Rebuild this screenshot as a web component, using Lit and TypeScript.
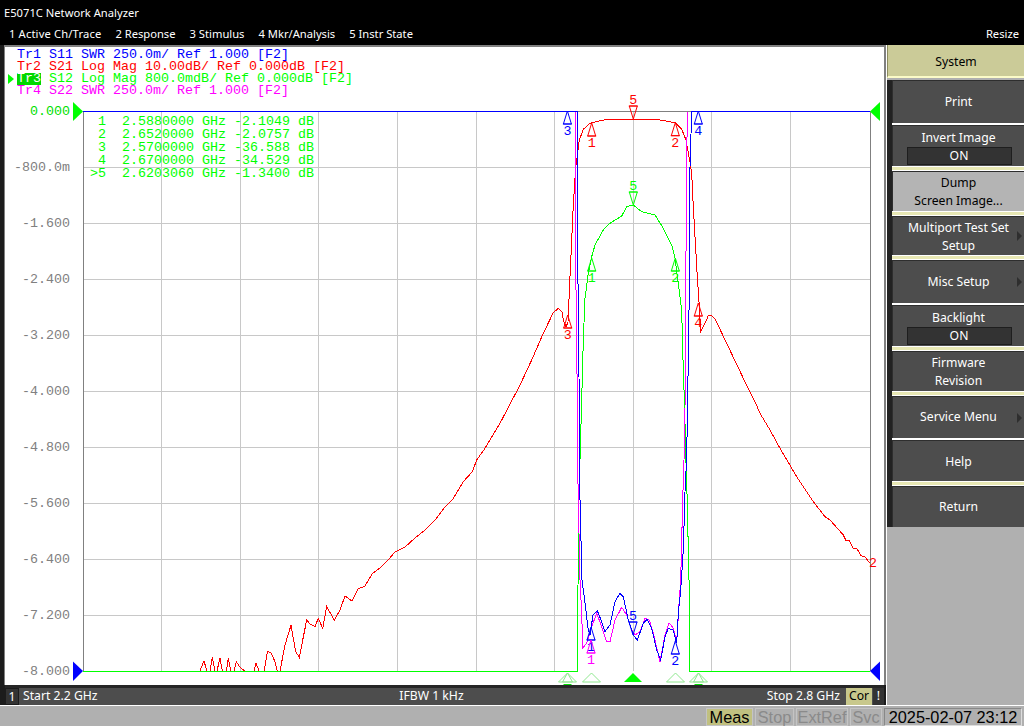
import { LitElement, html, svg, css } from "lit";
import { customElement } from "lit/decorators.js";

const BLUE = "#0000ff";
const RED = "#ff0000";
const GREEN = "#00ff00";
const MAGENTA = "#ff00ff";

const PLOT = { left: 83, right: 870, top: 111, bottom: 671 };

// traces in page pixels, read off the reference
const S21 =
  "83,671 200,671 204,660.7 206.7,671 210,671 212.3,657.3 215,671 217,671 220,658 222.3,671 226.5,671 228.3,658 230.7,671 234,671 236.3,662 240.7,668 245,671 254,671 256,663 259,671 264.3,671 267.3,651.7 270.7,652.3 275,661.7 277.3,671 280,671 285,645 291,625.3 295.7,651.7 299.3,657.3 306.7,620 310,624 315,626.7 318.3,618.3 322.7,628.3 326.7,606.7 334.3,620 340,610 345,596 352,601 358,589 365,586 372,574 380,568 388,560 395,552 405,547 415,538 425,530 435,520 445,507 452.7,499.3 463.3,481.7 472.3,471.7 476.7,460 485,448.3 500,423.3 520,385 531.7,360 543.3,333.3 553.3,312.7 558.3,308.3 562,312 563.3,320 566,327 568,322 570,276.7 573.3,205 575.7,166.7 577.7,153 579.3,140 583.3,129.3 590,123.3 600,120.7 608.3,119.3 633.3,119.3 660,120 675,122.7 681.7,129.3 686,140 688.3,153 690,162 691.7,173 693.3,206.7 697.3,276.7 699.3,306.7 700.7,331.7 705,323.3 708.3,315.7 711.7,315.7 715.7,320 722.7,335 743.3,378.3 755,401.7 760,413.3 770,430 780,448.3 796.7,476.7 813.3,501.7 825,516.7 830,520 843.3,535 845.7,540 849.3,540 853.3,549 856.7,548.3 861,555.7 865,556.7 869.3,562.7";
const S11 =
  "83,111 577.3,111 577.7,223 578.3,340 579,376.7 580,500 582,580 585,603 588.3,630 590,635 593,615 597.3,610.7 601.7,621.7 605,631.7 610,625 615,601.7 620,593.3 623.3,596.7 628.3,620 633.3,635 637.3,640 643.3,623.3 647.3,619.3 651.7,628.3 656.7,650 660.7,660 665,636.7 668.3,628.3 673.3,630 676.7,643.3 678.3,613.3 680.7,590 683.3,550 685,491.7 686.7,456.7 688.3,358 689.3,290 690,166.7 691.7,111 870,111";
const S22 =
  "575.7,111 575.7,163 576,290 576.7,300 577.3,443 578.3,500 580,580 581.7,613 582.7,648 586.7,643 591.7,626.7 596.7,613.3 601.7,626.7 606.7,641.7 610,641.7 615,620 621.7,607.3 626.7,615 631.7,630 635,635 640,631.7 645,618.3 649.3,620 653.3,633.3 660,661.7 665,635 669,622.7 673.3,628.3 676.7,641.7 679.3,600 680.7,580 682.7,500 684,460 685,410 685.7,290 686.7,166.7 687.3,111";
const S12 =
  "83,671 577.5,671 577.5,610 578.5,560 579,500 580,460 581.7,400 583.3,340 585,298.3 588.3,273 591.7,256.7 595,245 603.3,230 610,223.3 621.7,216 626.7,206.7 633.3,205 641.7,211.7 655,215 663.3,228.3 671.7,245 675,258.3 678.3,283.3 680,297 681.7,310 682.7,350 684,390 685,423 686,463 687.3,503 688.3,550 689,580 689,622 689.3,671 870,671";

const LEGEND = [
  { id: "Tr1", rest: " S11 SWR 250.0m/ Ref 1.000 [F2]", color: BLUE },
  { id: "Tr2", rest: " S21 Log Mag 10.00dB/ Ref 0.000dB [F2]", color: RED },
  { id: "Tr3", rest: " S12 Log Mag 800.0mdB/ Ref 0.000dB [F2]", color: GREEN, active: true },
  { id: "Tr4", rest: " S22 SWR 250.0m/ Ref 1.000 [F2]", color: MAGENTA },
];

const READOUT = [
  " 1  2.5880000 GHz -2.1049 dB",
  " 2  2.6520000 GHz -2.0757 dB",
  " 3  2.5700000 GHz -36.588 dB",
  " 4  2.6700000 GHz -34.529 dB",
  ">5  2.6203060 GHz -1.3400 dB",
];

const SCALE = ["0.000", "-800.0m", "-1.600", "-2.400", "-3.200", "-4.000", "-4.800", "-5.600", "-6.400", "-7.200", "-8.000"];

// x, apex y, label, colour, pointing down?
const MARKERS: [number, number, string, string, boolean?][] = [
  [567.4, 111, "3", BLUE],
  [698.3, 111, "4", BLUE],
  [591.7, 123, "1", RED],
  [675.3, 122.7, "2", RED],
  [633.3, 119, "5", RED, true],
  [591.7, 258, "1", GREEN],
  [675.3, 258, "2", GREEN],
  [633.3, 205, "5", GREEN, true],
  [567.7, 315, "3", RED],
  [698.3, 303, "4", RED],
  [591, 627, "1", BLUE],
  [591, 640, "1", MAGENTA],
  [675.3, 641, "2", BLUE],
  [633, 635, "5", BLUE, true],
];

const KEYS = [
  { h: 43, sep: "thin", lines: ["Print"] },
  { h: 41, sep: "wide", lines: ["Invert Image"], value: "ON", dy: 2 },
  { h: 40, sep: "wide", lines: ["Dump", "Screen Image..."], on: true },
  { h: 39, sep: "wide", lines: ["Multiport Test Set", "Setup"], arrow: true, dy: 2 },
  { h: 43, sep: "thin", lines: ["Misc Setup"], arrow: true },
  { h: 41, sep: "wide", lines: ["Backlight"], value: "ON", dy: 2 },
  { h: 40, sep: "wide", lines: ["Firmware", "Revision"] },
  { h: 42, sep: "thin", lines: ["Service Menu"], arrow: true, dy: -2 },
  { h: 41, sep: "wide", lines: ["Help"], dy: 2 },
  { h: 41, sep: "none", lines: ["Return"] },
];

@customElement("app-root")
export class AppRoot extends LitElement {
  static styles = css`
    :host {
      display: block;
      width: 1024px;
      height: 726px;
      overflow: hidden;
      background: #b0b0b0;
      font-family: "Noto Sans", "Liberation Sans", sans-serif;
      font-size: 12.2px;
    }
    .top {
      height: 45px;
      background: #000;
      color: #fff;
      font-size: 11.2px;
    }
    .title {
      height: 24px;
      padding: 0 4px;
      line-height: 26px;
    }
    .menu {
      display: flex;
      height: 21px;
      line-height: 19px;
      padding: 0 5px 0 9px;
      gap: 14px;
    }
    .menu span:first-child {
      letter-spacing: 0.15px;
    }
    .menu .resize {
      margin-left: auto;
    }
    .main {
      display: flex;
      height: 660px;
    }
    .left {
      width: 887px;
      box-sizing: border-box;
      background: #1c1c1c;
      padding-left: 4px;
      border-right: 1px solid #fff;
    }
    .chart {
      position: relative;
      width: 879px;
      height: 638px;
      background: #fff;
      border-top: 2px solid #808080;
      border-left: 1px solid #808080;
      border-right: 2px solid #808080;
      font-family: "Liberation Mono", monospace;
      font-size: 13.33px;
    }
    .legend {
      position: relative;
      height: 48px;
      padding: 2px 0 0 12px;
      line-height: 12px;
    }
    .legend .row {
      white-space: pre;
      height: 12px;
    }
    .legend .id.active {
      display: inline-block;
      background: #00d800;
      color: #fff;
    }
    .legend .pointer {
      position: absolute;
      left: 3px;
      top: 27px;
      width: 0;
      height: 0;
      border-left: 6px solid #00ff00;
      border-top: 5px solid transparent;
      border-bottom: 5px solid transparent;
    }
    svg {
      display: block;
      overflow: visible;
    }
    svg text {
      font-family: "Liberation Mono", monospace;
      font-size: 13.33px;
    }
    .readout {
      position: absolute;
      left: 85px;
      top: 68px;
      color: #00ff00;
      line-height: 13px;
    }
    .readout div {
      white-space: pre;
    }
    .strip {
      display: flex;
      align-items: stretch;
      height: 20px;
      box-sizing: border-box;
      border-top: 3px solid #262626;
      background: #4d4d4d;
      color: #fff;
      margin: 0 2px 0 1px;
      line-height: 15px;
    }
    .strip .chan {
      width: 14px;
      background: #333;
      border: 1px solid #1c1c1c;
      box-sizing: border-box;
      text-align: center;
    }
    .strip .info {
      flex: 1;
      display: grid;
      grid-template-columns: 1fr auto 1fr;
      padding: 0 6px 0 4px;
    }
    .strip .info span:last-child {
      text-align: right;
    }
    .strip .cor {
      width: 26px;
      background: #c8c88c;
      color: #000;
      text-align: center;
    }
    .strip .warn {
      width: 11px;
      margin-left: 1px;
      background: #333;
      text-align: center;
    }
    .keys {
      width: 137px;
      display: flex;
      flex-direction: column;
    }
    .system {
      height: 31px;
      line-height: 33px;
      text-align: center;
      background: #cbcb98;
      color: #000;
      border-left: 1px solid #8c8c60;
      border-bottom: 2px solid #fbfbc8;
    }
    .stack {
      margin-top: 2px;
      display: flex;
      flex-direction: column;
      border-left: 5px solid #222;
      background: #fff;
    }
    .key {
      position: relative;
      box-sizing: border-box;
      display: flex;
      flex-direction: column;
      justify-content: center;
      align-items: center;
      background: #4d4d4d;
      color: #fff;
      line-height: 18px;
      border-top: 1px solid #2e2e2e;
      border-left: 1px solid #2e2e2e;
    }
    .key.on {
      background: #b4b4b4;
      color: #000;
    }
    .key .value {
      width: 105px;
      height: 18px;
      box-sizing: border-box;
      margin-left: 1px;
      background: #333;
      border: 1px solid #1e1e1e;
      text-align: center;
      line-height: 16px;
    }
    .key .arrow {
      position: absolute;
      right: 2px;
      top: 50%;
      margin-top: -5px;
      width: 0;
      height: 0;
      border-left: 5px solid #2e2e2e;
      border-top: 5px solid transparent;
      border-bottom: 5px solid transparent;
    }
    .sep.thin {
      height: 2px;
      background: #fff;
    }
    .sep.wide {
      height: 5px;
      box-sizing: border-box;
      background: #e8e8b4;
      border-top: 1px solid #fff;
      border-bottom: 1px solid #fff;
    }
    .status {
      display: flex;
      justify-content: flex-end;
      gap: 2px;
      height: 21px;
      box-sizing: border-box;
      border-top: 1px solid #fff;
      padding: 2px 2px 0 0;
      font-family: "Liberation Sans", sans-serif;
      font-size: 16.3px;
      line-height: 16px;
      background: #b0b0b0;
    }
    .status span {
      text-align: center;
      color: #8a8a8a;
      border: 1px solid #c4c4c4;
      box-sizing: border-box;
    }
    .status .meas {
      width: 47px;
      background: #c0c080;
      color: #000;
    }
    .status .clock {
      width: 138px;
      color: #000;
      border-color: #888 #ddd #ddd #888;
    }
  `;

  private triangle(x: number, apex: number, color: string, down = false) {
    const h = 13;
    const base = down ? apex - h : apex + h;
    return svg`<path d="M${x} ${apex}L${x - 4} ${base}H${x + 4}Z" fill="none" stroke=${color} />
      <path d="M${x - 4.5} ${base}H${x + 4.5}" stroke=${color} />`;
  }

  private marker([x, apex, label, color, down]: (typeof MARKERS)[number]) {
    const ty = down ? apex - 15 : apex + 24;
    return svg`${this.triangle(x, apex, color, down)}
      <text x=${x} y=${ty} fill=${color} text-anchor="middle">${label}</text>`;
  }

  private stim(x: number, double = false) {
    const t = (dx: number) =>
      svg`<path d="M${x} 673L${x - dx} 682H${x + dx}Z" fill="none" stroke="#8fe88f" />`;
    return double
      ? svg`${t(9)}${t(5)}<path d="M${x - 4} 684.5H${x + 4}" stroke="#00e000" />`
      : t(9);
  }

  private plot() {
    const { left, right, top, bottom } = PLOT;
    const vert = Array.from({ length: 9 }, (_, i) => Math.floor(left + 78.6 * (i + 1)));
    return svg`
      <svg width="879" height="588" viewBox="5 97 879 588">
        ${SCALE.map((_, i) =>
          i > 0 && i < 10
            ? svg`<path d="M${left} ${top + i * 56 + 0.5}H${right}" stroke="#c8c8c8" />`
            : null
        )}
        ${vert.map((x) => svg`<path d="M${x + 0.5} ${top}V${bottom}" stroke="#c8c8c8" />`)}
        <path d="M${left + 0.5} ${top}V${bottom}M${right + 0.5} ${top}V${bottom}M${left} ${top + 0.5}H${right}" stroke="#808080" />
        ${SCALE.map(
          (v, i) => svg`<text x="70" y=${top + i * 56 + 4} text-anchor="end" fill=${i === 0 ? "#00e000" : "#808080"}>${v}</text>`
        )}
        <g fill="none" shape-rendering="crispEdges">
          <polyline points=${S21} stroke=${RED} />
          <polyline points=${S12} stroke=${GREEN} />
          <polyline points=${S22} stroke=${MAGENTA} />
          <polyline points=${S11} stroke=${BLUE} />
        </g>
        <path d="M578 111.5H691" stroke="#808080" />
        ${MARKERS.map((m) => this.marker(m))}
        <text x="873" y="567" fill=${RED} text-anchor="middle">2</text>
        <path d="M73 102L83 111.5L73 121Z" fill=${GREEN} />
        <path d="M73 661.5L83 671L73 681Z" fill=${BLUE} />
        <path d="M880 102L870 111.5L880 121Z" fill=${GREEN} />
        <path d="M880 661.5L870 671L880 681Z" fill=${BLUE} />
        ${this.stim(567.5, true)}${this.stim(591.5)}
        <path d="M633 673L624 682H642Z" fill=${GREEN} />
        ${this.stim(675.5)}${this.stim(698.5, true)}
      </svg>`;
  }

  render() {
    return html`
      <div class="top">
        <div class="title">E5071C Network Analyzer</div>
        <div class="menu">
          <span>1 Active Ch/Trace</span><span>2 Response</span><span>3 Stimulus</span
          ><span>4 Mkr/Analysis</span><span>5 Instr State</span>
          <span class="resize">Resize</span>
        </div>
      </div>
      <div class="main">
        <div class="left">
          <div class="chart">
            <div class="legend">
              <div class="pointer"></div>
              ${LEGEND.map(
                (t) => html`<div class="row" style="color:${t.color}"><span class="id ${t.active ? "active" : ""}">${t.id}</span>${t.rest}</div>`
              )}
            </div>
            ${this.plot()}
            <div class="readout">${READOUT.map((l) => html`<div>${l}</div>`)}</div>
          </div>
          <div class="strip">
            <div class="chan">1</div>
            <div class="info">
              <span>Start 2.2 GHz</span><span>IFBW 1 kHz</span><span>Stop 2.8 GHz</span>
            </div>
            <div class="cor">Cor</div>
            <div class="warn">!</div>
          </div>
        </div>
        <div class="keys">
          <div class="system">System</div>
          <div class="stack">
            ${KEYS.map(
              (k) => html`
                <div class="key ${k.on ? "on" : ""}" style="height:${k.h}px;padding-top:${Math.max(k.dy ?? 0, 0)}px;padding-bottom:${Math.max(-(k.dy ?? 0), 0)}px">
                  ${k.lines.map((l) => html`<div>${l}</div>`)}
                  ${k.value ? html`<div class="value">${k.value}</div>` : null}
                  ${k.arrow ? html`<div class="arrow"></div>` : null}
                </div>
                ${k.sep === "none" ? null : html`<div class="sep ${k.sep}"></div>`}
              `
            )}
          </div>
        </div>
      </div>
      <div class="status">
        <span class="meas">Meas</span>
        <span style="width:39px">Stop</span>
        <span style="width:52px">ExtRef</span>
        <span style="width:32px">Svc</span>
        <span class="clock">2025-02-07 23:12</span>
      </div>
    `;
  }
}
